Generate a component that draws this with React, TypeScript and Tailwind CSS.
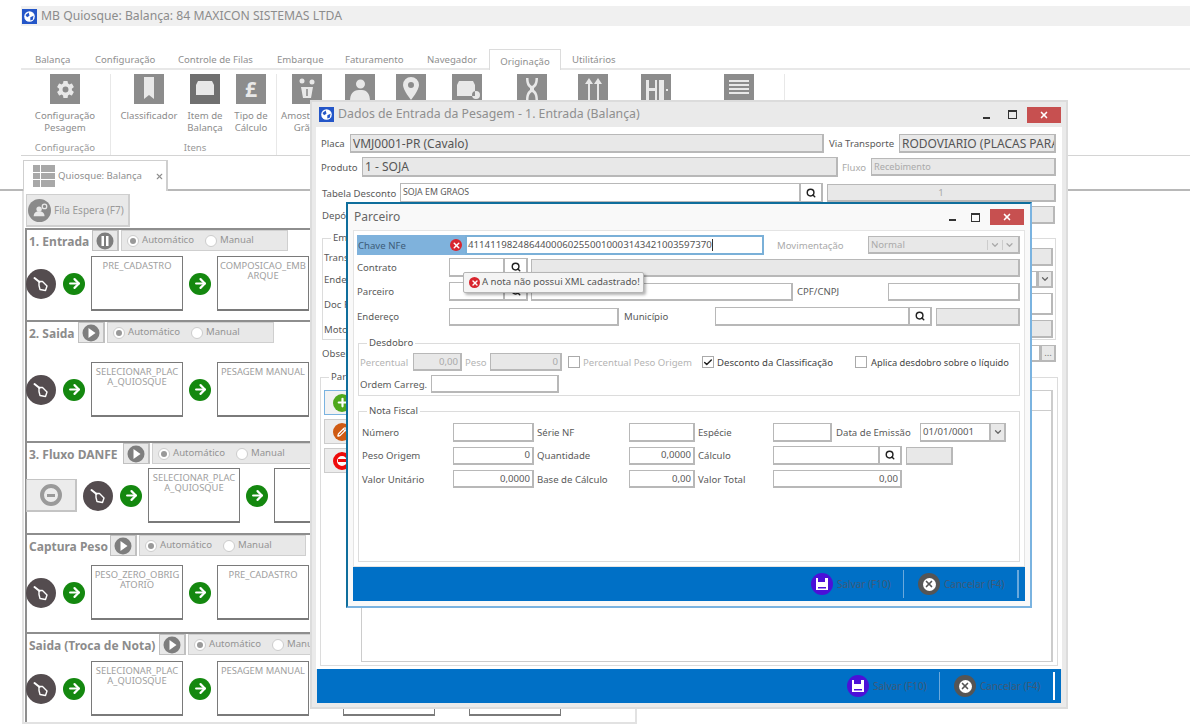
import { ArrowRight, Check, ChevronDown, Search, X, Plus, Pencil } from "lucide-react";
import { IoSettingsSharp } from "react-icons/io5";
import type { ReactNode } from "react";

function AppIcon({ className }: { className: string }) {
  return (
    <span className={`flex items-center justify-center bg-[#2456c8] ${className}`}>
      <svg viewBox="0 0 16 16" className="h-[13px] w-[13px]">
        <circle cx="8" cy="8" r="6.5" fill="#fff" />
        <path d="M3 6l4-3 1 4-3 2zM9 9l4-2-1 5-3 1z" fill="#2456c8" />
      </svg>
    </span>
  );
}

function WindowButtons({ small }: { small?: boolean }) {
  return (
    <div className="flex items-center">
      <span className="mt-[6px] h-[2px] w-[7px] bg-[#333]" />
      <span className={`h-[9px] w-[9px] border border-t-2 border-[#333] ${small ? "ml-[15px]" : "ml-[18px]"}`} />
      <span className="ml-[10px] flex h-[16px] w-[34px] items-center justify-center bg-[#c75050]">
        <X className="h-[10px] w-[10px] text-white" strokeWidth={4} />
      </span>
    </div>
  );
}

function Footer({ sepClass }: { sepClass: string }) {
  return (
    <div className="flex h-[34px] items-center justify-end bg-[#0070c6] text-[10px] text-[#3f5a78]">
      <span className="flex h-[22px] w-[22px] items-center justify-center rounded-full bg-[#4b10d8]">
        <svg viewBox="0 0 14 14" className="h-[14px] w-[14px]">
          <path d="M1 1h2v4h7V1h3v12H1z" fill="#fff" />
          <path d="M3 10h8v1.5H3z" fill="#4b10d8" />
        </svg>
      </span>
      <span className="ml-[4px] w-[66px]">Salvar (F10)</span>
      <span className="h-[28px] w-px bg-[#6aa9dc]" />
      <span className="ml-[14px] flex h-[22px] w-[22px] items-center justify-center rounded-full bg-[#555]">
        <span className="flex h-[13px] w-[13px] items-center justify-center rounded-full bg-white">
          <X className="h-[10px] w-[10px] text-[#555]" strokeWidth={4} />
        </span>
      </span>
      <span className="ml-[4px] w-[73px]">Cancelar (F4)</span>
      <span className={`h-[28px] w-[2px] ${sepClass}`} />
      <span className="w-[6px]" />
    </div>
  );
}

function Field({ className, grey, children }: { className: string; grey?: boolean; children?: ReactNode }) {
  return (
    <div
      className={`flex shrink-0 items-center overflow-hidden whitespace-nowrap border border-b-2 border-r-2 border-[#b8b8b8] px-[2px] pt-[1px] ${grey ? "bg-[#e8e8e8]" : "bg-white"} ${className}`}
    >
      {children}
    </div>
  );
}

function SearchBtn({ className }: { className?: string }) {
  return (
    <div className={`flex shrink-0 items-center justify-center border border-b-2 border-r-2 border-l-0 border-[#b8b8b8] bg-white ${className ?? ""}`}>
      <Search className="h-[10px] w-[10px] text-[#222]" strokeWidth={3.5} />
    </div>
  );
}

function Label({ className, children }: { className: string; children: ReactNode }) {
  return <span className={`shrink-0 whitespace-nowrap pt-[2px] ${className}`}>{children}</span>;
}

function Group({ title, className, children }: { title: string; className: string; children?: ReactNode }) {
  return (
    <div className={`relative border border-[#dcdcdc] ${className}`}>
      <span className="absolute left-[8px] top-[-8px] bg-white px-[2px] text-[#555]">{title}</span>
      {children}
    </div>
  );
}

function Check12({ checked }: { checked?: boolean }) {
  return (
    <span className="flex h-[12px] w-[12px] shrink-0 items-center justify-center border border-[#aaa] bg-white">
      {checked && <Check className="h-[11px] w-[11px] text-[#222]" strokeWidth={3.5} />}
    </span>
  );
}

function RibbonIcon({ className, bg, children }: { className: string; bg?: string; children: ReactNode }) {
  return (
    <div className={`flex shrink-0 flex-col items-center ${className}`}>
      <span className={`flex h-[30px] w-[30px] items-center justify-center text-[#e8e8e8] ${bg ?? "bg-[#8c8c8c]"}`}>{children}</span>
    </div>
  );
}

function RibbonSvg({ d }: { d: string }) {
  return (
    <svg viewBox="0 0 30 30" className="h-[30px] w-[30px]">
      <path d={d} fill="#e8e8e8" fillRule="evenodd" />
    </svg>
  );
}

function RibbonLabel({ children }: { children: ReactNode }) {
  return <div className="mt-[6px] whitespace-nowrap text-center leading-[12px] text-[#8c8c8c]">{children}</div>;
}

function Chain({ text }: { text: string }) {
  return (
    <>
      <span className="flex h-[22px] w-[22px] shrink-0 items-center justify-center rounded-full bg-[#14880f]">
        <ArrowRight className="h-[15px] w-[15px] text-white" strokeWidth={3.5} />
      </span>
      <div className="h-[55px] w-[92px] shrink-0 overflow-hidden break-all border border-b-2 border-[#7a7a7a] bg-white px-[2px] pt-[4px] text-center text-[9.4px] leading-[10px] text-[#a0a0a0]">
        {text}
      </div>
    </>
  );
}

function BellCircle() {
  return (
    <span className="flex h-[30px] w-[30px] shrink-0 items-center justify-center rounded-full bg-[#544c4f]">
      <svg viewBox="0 0 20 20" className="h-[20px] w-[20px]" fill="none" stroke="#fff" strokeLinecap="round" strokeLinejoin="round">
        <path d="M3.5 4L8.5 8" strokeWidth="2" />
        <path d="M8 7.5L11.5 7.5L16 12L14.5 16.5L9 15.5L8 11.5Z" strokeWidth="1.4" />
      </svg>
    </span>
  );
}

function Stage({
  title,
  titleClass,
  pause,
  heightClass,
  rowClass,
  steps,
  minus,
}: {
  title: string;
  titleClass: string;
  pause?: boolean;
  heightClass: string;
  rowClass: string;
  steps: string[];
  minus?: boolean;
}) {
  return (
    <div className={`border-l-2 border-t-2 border-[#8e8e8e] ${heightClass}`}>
      <div className="flex h-[21px] items-start">
        <span className={`shrink-0 whitespace-nowrap pl-[2px] pt-[4px] text-[12px] font-bold leading-[16px] text-[#8c8c8c] ${titleClass}`}>{title}</span>
        <span className="flex h-[21px] w-[27px] shrink-0 items-center justify-center border border-r-2 border-[#c0c0c0] bg-[#e8e8e8]">
          <svg viewBox="0 0 18 18" className="h-[18px] w-[18px]">
            <circle cx="9" cy="9" r="8.5" fill="#7e7e7e" />
            {pause ? <path d="M5.5 4h2.5v10H5.5zM10 4h2.5v10H10z" fill="#fff" /> : <path d="M6.5 4l7 5-7 5z" fill="#fff" />}
          </svg>
        </span>
        <div className="ml-[2px] flex h-[21px] w-[167px] shrink-0 items-center border border-[#cfcfcf] bg-[#e8e8e8] pl-[5px] text-[#949494]">
          <span className="flex h-[12px] w-[12px] shrink-0 items-center justify-center rounded-full border border-[#ccc] bg-white">
            <span className="h-[6px] w-[6px] rounded-full bg-[#999]" />
          </span>
          <span className="ml-[3px] w-[63px]">Automático</span>
          <span className="h-[12px] w-[12px] shrink-0 rounded-full border border-[#ccc] bg-white" />
          <span className="ml-[3px]">Manual</span>
        </div>
      </div>
      <div className={`flex items-center ${rowClass}`}>
        {minus && (
          <span className="ml-[-1px] mr-[6px] flex h-[33px] w-[51px] shrink-0 items-center justify-center border border-b-2 border-r-2 border-[#c4c4c4] bg-[#ececec]">
            <span className="flex h-[22px] w-[22px] items-center justify-center rounded-full border-[4px] border-[#9a9a9a]">
              <span className="h-[3px] w-[8px] bg-[#9a9a9a]" />
            </span>
          </span>
        )}
        <span className={minus ? "" : "ml-[-1px]"}>
          <BellCircle />
        </span>
        <div className="ml-[7px] flex items-center gap-[6px]">
          {steps.map((s, i) => (
            <Chain key={i} text={s} />
          ))}
        </div>
      </div>
    </div>
  );
}

export default function App() {
  return (
    <div className="relative h-[726px] w-[1190px] overflow-hidden bg-white font-['Noto_Sans',sans-serif] text-[9.6px] text-[#5a5a5a]">
      <div className="ml-[21px] mt-[6px] flex h-[20px] items-center bg-[#f0f0f0] pl-[1px]">
        <AppIcon className="h-[15px] w-[15px]" />
        <span className="ml-[4px] text-[12.2px] text-[#8c8c8c]">MB Quiosque: Balança: 84 MAXICON SISTEMAS LTDA</span>
      </div>

      <div className="ml-[21px] mt-[24px] flex h-[20px] items-end border-b-2 border-[#e8e8e8] pb-[1px] text-[#8f8f8f]">
        <span className="ml-[14px] w-[60px]">Balança</span>
        <span className="w-[83px]">Configuração</span>
        <span className="w-[99px]">Controle de Filas</span>
        <span className="w-[68px]">Embarque</span>
        <span className="w-[82px]">Faturamento</span>
        <span className="w-[62px]">Navegador</span>
        <span className="relative z-10 mb-[-3px] flex h-[21px] w-[72px] items-end justify-center border border-b-0 border-[#dcdcdc] bg-white pb-[1px]">Originação</span>
        <span className="ml-[11px]">Utilitários</span>
      </div>

      <div className="ml-[21px] flex h-[86px] border-b border-[#d4d4d4] pt-[4px]">
        <div className="relative w-[90px] shrink-0 border-r border-[#e8e8e8]">
          <div className="ml-[-1px] flex flex-col items-center">
            <RibbonIcon className="w-[86px]">
              <IoSettingsSharp className="h-[19px] w-[19px]" />
            </RibbonIcon>
            <div className="w-[86px]">
              <RibbonLabel>
                Configuração
                <br />
                Pesagem
              </RibbonLabel>
            </div>
            <div className="mt-[7px] w-[86px] text-center text-[#9a9a9a]">Configuração</div>
          </div>
        </div>
        <div className="flex w-[166px] shrink-0 flex-col border-r border-[#e8e8e8] pl-[3px]">
          <div className="flex">
            <div className="w-[70px]">
              <RibbonIcon className="w-[70px]">
                <RibbonSvg d="M10 3h10v22l-5-4-5 4z" />
              </RibbonIcon>
              <RibbonLabel>Classificador</RibbonLabel>
            </div>
            <div className="w-[42px]">
              <RibbonIcon className="w-[42px]" bg="bg-[#707070]">
                <RibbonSvg d="M6 11l2-4h14l2 4v10H6z" />
              </RibbonIcon>
              <RibbonLabel>
                Item de
                <br />
                Balança
              </RibbonLabel>
            </div>
            <div className="w-[50px]">
              <RibbonIcon className="w-[50px]">
                <span className="text-[21px] font-bold leading-none">£</span>
              </RibbonIcon>
              <RibbonLabel>
                Tipo de
                <br />
                Cálculo
              </RibbonLabel>
            </div>
          </div>
          <div className="mt-[7px] text-center text-[#9a9a9a]">Itens</div>
        </div>
        <div className="flex h-[26px] w-[508px] shrink-0 border-r border-[#e8e8e8]">
          <div className="w-[60px]">
            <RibbonIcon className="w-[60px]">
              <svg viewBox="0 0 30 30" className="h-[30px] w-[30px]">
                <path d="M9 13h12l-2 11h-8z" fill="#e8e8e8" />
                <circle cx="10" cy="7" r="2.5" fill="#e8e8e8" />
                <circle cx="20" cy="8" r="2.5" fill="#e8e8e8" />
                <path d="M15 15v7" stroke="#8c8c8c" strokeWidth="1.6" />
              </svg>
            </RibbonIcon>
            <RibbonLabel>
              Amostra de
              <br />
              Grãos
            </RibbonLabel>
          </div>
          <RibbonIcon className="w-[46px]">
            <RibbonSvg d="M11 10a4.5 4.5 0 1 1 9 0a4.5 4.5 0 1 1-9 0zM5 27c0-7 3-11 9-11h3c5 0 8 4 8 11z" />
          </RibbonIcon>
          <RibbonIcon className="w-[56px]">
            <RibbonSvg d="M15 3a8 8 0 0 1 8 8c0 5-8 15-8 15s-8-10-8-15a8 8 0 0 1 8-8zM15 8a3 3 0 1 0 0 6a3 3 0 0 0 0-6z" />
          </RibbonIcon>
          <RibbonIcon className="w-[56px]">
            <RibbonSvg d="M5 11l2-4h14l2 4v11H5zM24 17a4 4 0 1 1 0 8a4 4 0 0 1 0-8z" />
          </RibbonIcon>
          <RibbonIcon className="w-[74px]">
            <RibbonSvg d="M9 4h2.5c0 5 1.5 7 3.5 8c2-1 3.5-3 3.5-8H21c0 6-2 9-4 10v2c2 1 4 4 4 10h-2.5c0-5-1.5-7-3.5-8c-2 1-3.5 3-3.5 8H9c0-6 2-9 4-10v-2c-2-1-4-4-4-10z" />
          </RibbonIcon>
          <RibbonIcon className="w-[48px]">
            <RibbonSvg d="M11 4l4 6h-3v16h-2V10H7zM20 4l4 6h-3v16h-2V10h-3z" />
          </RibbonIcon>
          <RibbonIcon className="w-[78px]">
            <RibbonSvg d="M5 6h3v8h6V6h2v20h-2V17H8v9H5zM18 6h5v20h-5zM25 15h2v2h-2z" />
          </RibbonIcon>
          <RibbonIcon className="w-[88px]">
            <span className="flex w-[20px] flex-col gap-[2px]">
              <span className="h-[2px] bg-[#e8e8e8]" />
              <span className="h-[2px] bg-[#e8e8e8]" />
              <span className="h-[2px] bg-[#e8e8e8]" />
              <span className="h-[2px] bg-[#e8e8e8]" />
            </span>
          </RibbonIcon>
        </div>
      </div>

      <div className="mt-[4px] flex h-[31px] border-b-2 border-[#b8b8b8]">
        <div className="relative ml-[23px] flex h-[31px] w-[145px] items-center border border-b-0 border-r-2 border-[#cfcfcf] bg-white pl-[9px] text-[#8f8f8f]">
          <span className="grid h-[22px] w-[22px] shrink-0 grid-cols-[1fr_2fr] grid-rows-3 gap-px bg-white">
            <span className="bg-[#a8a8a8]" />
            <span className="bg-[#a8a8a8]" />
            <span className="bg-[#a8a8a8]" />
            <span className="bg-[#a8a8a8]" />
            <span className="bg-[#a8a8a8]" />
            <span className="bg-[#a8a8a8]" />
          </span>
          <span className="ml-[3px] whitespace-nowrap">Quiosque: Balança</span>
          <X className="ml-[13px] h-[9px] w-[9px] shrink-0" strokeWidth={3} />
        </div>
      </div>

      <div className="ml-[22px] flex w-[615px] flex-col border-b-2 border-l-2 border-r-2 border-[#e2e2e2] pl-px">
        <div className="ml-px mt-[3px] flex h-[33px] w-[104px] items-center border border-b-2 border-r-2 border-[#cfcfcf] bg-[#e9e9e9] pl-[1px] text-[10px] text-[#9a9a9a]">
          <span className="flex h-[23px] w-[23px] shrink-0 items-center justify-center rounded-full bg-[#8a8a8a]">
            <svg viewBox="0 0 20 20" className="h-[18px] w-[18px]">
              <circle cx="9" cy="9" r="3" fill="#e8e8e8" />
              <path d="M3 17c0-3.5 2.5-5.5 6-5.5s6 2 6 5.5z" fill="#e8e8e8" />
              <circle cx="15" cy="6" r="2.5" fill="none" stroke="#e8e8e8" strokeWidth="1.4" />
            </svg>
          </span>
          <span className="ml-[3px] whitespace-nowrap">Fila Espera (F7)</span>
        </div>
        <div className="mt-px">
          <Stage title="1. Entrada" titleClass="w-[65px]" pause heightClass="h-[92px]" rowClass="mt-[5px]" steps={["PRE_CADASTRO", "COMPOSICAO_EMBARQUE"]} />
          <Stage title="2. Saida" titleClass="w-[51px]" heightClass="h-[121px]" rowClass="mt-[19px]" steps={["SELECIONAR_PLACA_QUIOSQUE", "PESAGEM MANUAL"]} />
          <Stage title="3. Fluxo DANFE" titleClass="w-[96px]" heightClass="h-[92px]" rowClass="mt-[4px]" minus steps={["SELECIONAR_PLACA_QUIOSQUE", "D"]} />
          <Stage title="Captura Peso" titleClass="w-[83px]" heightClass="h-[99px]" rowClass="mt-[9px]" steps={["PESO_ZERO_OBRIGATORIO", "PRE_CADASTRO"]} />
          <Stage title="Saida (Troca de Nota)" titleClass="w-[132px]" heightClass="h-[90px]" rowClass="mt-[6px]" steps={["SELECIONAR_PLACA_QUIOSQUE", "PESAGEM MANUAL", "", ""]} />
        </div>
      </div>

      {/* janela de pesagem */}
      <div className="absolute left-[310px] top-[100px] flex h-[609px] w-[758px] flex-col border-2 border-[#dcdcdc] bg-[#eaeaea]">
        <div className="flex h-[25px] shrink-0 items-center justify-between pl-[7px] pr-[5px]">
          <div className="flex items-center">
            <AppIcon className="h-[15px] w-[15px]" />
            <span className="ml-[4px] text-[12.3px] text-[#8f8f8f]">Dados de Entrada da Pesagem - 1. Entrada (Balança)</span>
          </div>
          <WindowButtons />
        </div>
        <div className="mx-[4px] flex flex-1 flex-col bg-white pl-[5px] pr-[6px]">
          <div className="mt-[7px] flex h-[19px] items-center">
            <Label className="w-[29px]">Placa</Label>
            <Field grey className="h-[19px] w-[474px] text-[12px] text-[#555]">VMJ0001-PR (Cavalo)</Field>
            <Label className="ml-[5px] w-[70px]">Via Transporte</Label>
            <Field grey className="h-[19px] w-[157px] text-[12px] text-[#555]">RODOVIARIO (PLACAS PARA</Field>
          </div>
          <div className="mt-[4px] flex h-[20px] items-center">
            <Label className="w-[41px]">Produto</Label>
            <Field grey className="h-[20px] w-[476px] text-[12px] text-[#555]">1 - SOJA</Field>
            <Label className="ml-[4px] w-[29px] text-[#aaa]">Fluxo</Label>
            <Field grey className="h-[18px] w-[185px] text-[9.2px] text-[#aaa]">Recebimento</Field>
          </div>
          <div className="mt-[6px] flex h-[20px] items-center">
            <Label className="w-[79px] pl-px">Tabela Desconto</Label>
            <Field className="h-[20px] w-[401px] text-[8.8px]">SOJA EM GRAOS</Field>
            <SearchBtn className="h-[20px] w-[22px]" />
            <Field grey className="ml-[4px] h-[18px] w-[229px] justify-center text-[#aaa]">1</Field>
          </div>
          <div className="mt-[3px] flex h-[18px] items-center">
            <Label className="w-[505px] pl-px">Depósito</Label>
            <Field grey className="h-[18px] w-[229px]" />
          </div>
          <Group title="Embarque" className="ml-px mt-[14px] h-[102px] w-[734px]">
            <div className="mt-[9px] flex h-[18px] items-center">
              <Label className="w-[60px] pl-[1px]">Transportador</Label>
              <Field grey className="ml-[3px] h-[18px] w-[667px]" />
            </div>
            <div className="mt-[5px] flex h-[17px] items-center">
              <Label className="w-[60px] pl-[1px]">Endereço</Label>
              <Field className="ml-[3px] h-[17px] w-[652px]" />
              <span className="flex h-[17px] w-[15px] items-center justify-center border border-b-2 border-r-2 border-[#b8b8b8] bg-[#e8e8e8]">
                <ChevronDown className="h-[10px] w-[10px] text-[#666]" strokeWidth={3} />
              </span>
            </div>
            <div className="mt-[5px] flex h-[22px] items-center">
              <Label className="w-[60px] pl-[1px]">Doc Frete</Label>
              <Field className="ml-[3px] h-[22px] w-[667px]" />
            </div>
            <div className="mt-[5px] flex h-[18px] items-center">
              <Label className="w-[60px] pl-[1px]">Motorista</Label>
              <Field grey className="ml-[3px] h-[18px] w-[667px]" />
            </div>
          </Group>
          <div className="mt-[5px] flex h-[17px] items-center">
            <Label className="w-[60px] pl-px">Observação</Label>
            <Field className="h-[17px] w-[660px]" />
            <span className="flex h-[17px] w-[15px] items-center justify-center border border-b-2 border-r-2 border-[#b8b8b8] bg-[#e8e8e8] text-[#777]">...</span>
          </div>
          <Group title="Parcelas" className="ml-[-1px] mt-[15px] flex h-[289px] w-[738px] pl-[3px] pt-[12px]">
            <div className="flex w-[37px] shrink-0 flex-col gap-[4px]">
              <span className="flex h-[25px] w-[36px] items-center justify-center border border-[#7ab3e0] bg-[#f2f2f2]">
                <span className="flex h-[18px] w-[18px] items-center justify-center rounded-full bg-[#4fa81c]">
                  <Plus className="h-[13px] w-[13px] text-white" strokeWidth={4} />
                </span>
              </span>
              <span className="flex h-[25px] w-[36px] items-center justify-center border border-[#ccc] bg-[#ececec]">
                <span className="flex h-[18px] w-[18px] items-center justify-center rounded-full bg-[#cf5a12]">
                  <Pencil className="h-[10px] w-[10px] text-white" strokeWidth={3} />
                </span>
              </span>
              <span className="flex h-[25px] w-[36px] items-center justify-center border border-[#ccc] bg-[#ececec]">
                <span className="flex h-[18px] w-[18px] items-center justify-center rounded-full border-[4px] border-[#ee0a0a] bg-white">
                  <span className="h-[3px] w-[9px] bg-[#ee0a0a]" />
                </span>
              </span>
            </div>
            <div className="h-[272px] w-[692px] shrink-0 border border-r-2 border-[#cccccc]">
              <div className="h-[20px] border-b border-[#cccccc]" />
            </div>
          </Group>
        </div>
        <div className="mx-[5px] mb-[4px] mt-auto shrink-0">
          <Footer sepClass="bg-white" />
        </div>
      </div>

      {/* janela parceiro */}
      <div className="absolute left-[346px] top-[202px] flex h-[406px] w-[686px] flex-col border-2 border-b-[#7ab3e0] border-l-[#0f6e9c] border-r-[#7ab3e0] border-t-[#0f6e9c] bg-[#f9f9f9]">
        <div className="flex h-[26px] shrink-0 items-center justify-between pl-[6px] pr-[6px]">
          <span className="text-[12px] text-[#666]">Parceiro</span>
          <WindowButtons small />
        </div>
        <div className="mx-[5px] flex h-[337px] flex-col border border-[#e4e4e4] bg-white pl-[3px]">
          <div className="mt-[4px] flex h-[20px] items-center">
            <div className="relative flex h-[20px] w-[108px] shrink-0 items-center bg-[#7fb2dc] pl-px pt-[2px] text-[#3d5c78]">
              Chave NFe
              <span className="absolute left-[93px] top-[4px] flex h-[12px] w-[12px] items-center justify-center rounded-full bg-[#d8252e]">
                <X className="h-[9px] w-[9px] text-white" strokeWidth={4} />
              </span>
            </div>
            <div className="flex h-[20px] w-[299px] shrink-0 items-center border-2 border-[#7ab0d8] bg-white pl-[1px] text-[9.7px] text-[#555]">
              41141198248644000602550010003143421003597370<span className="h-[12px] w-px bg-[#333]" />
            </div>
            <Label className="ml-[13px] w-[91px] text-[#aaa]">Movimentação</Label>
            <Field grey className="h-[18px] w-[152px] text-[#aaa]">
              <span className="flex-1">Normal</span>
              <ChevronDown className="h-[10px] w-[15px] border-l border-[#ccc] text-[#aaa]" strokeWidth={3} />
              <ChevronDown className="h-[10px] w-[14px] border-l border-[#ccc] text-[#aaa]" strokeWidth={3} />
            </Field>
          </div>
          <div className="mt-[3px] flex h-[19px] items-center">
            <Label className="w-[92px]">Contrato</Label>
            <Field className="h-[19px] w-[56px]" />
            <SearchBtn className="h-[19px] w-[23px]" />
            <Field grey className="ml-[3px] h-[18px] w-[489px]" />
          </div>
          <div className="mt-[5px] flex h-[19px] items-center">
            <Label className="w-[92px]">Parceiro</Label>
            <Field className="h-[19px] w-[56px]" />
            <SearchBtn className="h-[19px] w-[23px]" />
            <Field className="ml-[3px] h-[18px] w-[262px]" />
            <Label className="ml-[4px] w-[91px]">CPF/CNPJ</Label>
            <Field className="h-[18px] w-[132px]" />
          </div>
          <div className="mt-[6px] flex h-[19px] items-center">
            <Label className="w-[92px]">Endereço</Label>
            <Field className="h-[18px] w-[170px]" />
            <Label className="ml-[5px] w-[91px]">Município</Label>
            <Field className="h-[19px] w-[195px]" />
            <SearchBtn className="h-[19px] w-[22px]" />
            <Field grey className="ml-[4px] h-[18px] w-[84px]" />
          </div>

          <Group title="Desdobro" className="ml-px mt-[17px] h-[53px] w-[662px] pl-[1px] pt-[9px]">
            <div className="flex h-[18px] items-center">
              <Label className="w-[53px] text-[#b4b4b4]">Percentual</Label>
              <Field grey className="h-[18px] w-[49px] justify-end text-[#aaa]">0,00</Field>
              <Label className="ml-[3px] w-[25px] text-[#b4b4b4]">Peso</Label>
              <Field grey className="h-[18px] w-[72px] justify-end text-[#aaa]">0</Field>
              <span className="ml-[6px]">
                <Check12 />
              </span>
              <Label className="ml-[3px] w-[119px] text-[#b4b4b4]">Percentual Peso Origem</Label>
              <Check12 checked />
              <Label className="ml-[3px] w-[138px] text-[#444]">Desconto da Classificação</Label>
              <Check12 />
              <Label className="ml-[4px] text-[9.3px] text-[#444]">Aplica desdobro sobre o líquido</Label>
            </div>
            <div className="mt-[4px] flex h-[18px] items-center">
              <Label className="w-[71px]">Ordem Carreg.</Label>
              <Field className="h-[18px] w-[128px]" />
            </div>
          </Group>

          <Group title="Nota Fiscal" className="ml-px mt-[15px] h-[151px] w-[662px] pl-[3px] pt-[11px]">
            <div className="flex h-[19px] items-center">
              <Label className="w-[91px]">Número</Label>
              <Field className="h-[19px] w-[81px]" />
              <Label className="ml-[3px] w-[92px]">Série NF</Label>
              <Field className="h-[19px] w-[66px]" />
              <Label className="ml-[3px] w-[75px]">Espécie</Label>
              <Field className="h-[19px] w-[59px]" />
              <Label className="ml-[4px] w-[84px]">Data de Emissão</Label>
              <Field className="h-[19px] w-[71px]">01/01/0001</Field>
              <span className="flex h-[19px] w-[15px] items-center justify-center border border-b-2 border-r-2 border-l-0 border-[#b8b8b8] bg-[#e8e8e8]">
                <ChevronDown className="h-[10px] w-[10px] text-[#666]" strokeWidth={3} />
              </span>
            </div>
            <div className="mt-[4px] flex h-[19px] items-center">
              <Label className="w-[91px]">Peso Origem</Label>
              <Field className="h-[18px] w-[81px] justify-end">0</Field>
              <Label className="ml-[3px] w-[92px]">Quantidade</Label>
              <Field className="h-[18px] w-[66px] justify-end">0,0000</Field>
              <Label className="ml-[3px] w-[75px]">Cálculo</Label>
              <Field className="h-[19px] w-[107px]" />
              <SearchBtn className="h-[19px] w-[22px]" />
              <Field grey className="ml-[4px] h-[18px] w-[47px]" />
            </div>
            <div className="mt-[5px] flex h-[18px] items-center">
              <Label className="w-[91px]">Valor Unitário</Label>
              <Field className="h-[18px] w-[81px] justify-end">0,0000</Field>
              <Label className="ml-[3px] w-[92px]">Base de Cálculo</Label>
              <Field className="h-[18px] w-[66px] justify-end">0,00</Field>
              <Label className="ml-[3px] w-[75px]">Valor Total</Label>
              <Field className="h-[18px] w-[129px] justify-end">0,00</Field>
            </div>
          </Group>
        </div>
        <div className="mx-[5px] mb-[5px] mt-auto shrink-0">
          <Footer sepClass="bg-[#6aa9dc]" />
        </div>

        <div className="absolute left-[115px] top-[68px] flex h-[21px] w-[181px] items-center rounded-[2px] border border-[#b5b5b5] bg-[#f4f4f4] pl-[5px] shadow-[2px_2px_3px_rgba(0,0,0,0.3)]">
          <span className="flex h-[11px] w-[11px] shrink-0 items-center justify-center rounded-full bg-[#d8252e]">
            <X className="h-[8px] w-[8px] text-white" strokeWidth={4} />
          </span>
          <span className="ml-[2px] whitespace-nowrap text-[#555]">A nota não possui XML cadastrado!</span>
        </div>
      </div>
    </div>
  );
}
